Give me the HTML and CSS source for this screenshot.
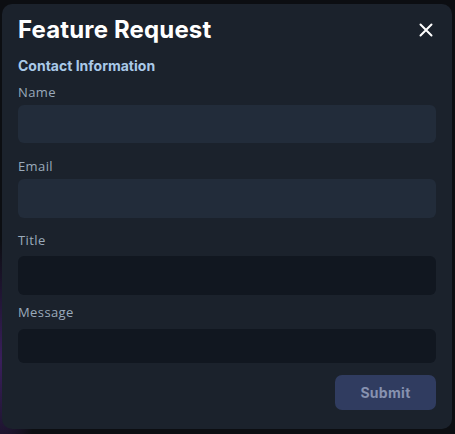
FILE: index.html
```html
<!DOCTYPE html>
<html>
<head>
<meta charset="utf-8">
<link rel="stylesheet" href="styles.css">
</head>
<body>
<div class="modal">
  <div class="header">
    <h1 class="title">Feature Request</h1>
    <button class="close" aria-label="Close">
      <svg width="14" height="14" viewBox="0 0 14 14"><path d="M1.5 1.5 L12.5 12.5 M12.5 1.5 L1.5 12.5" stroke="#ffffff" stroke-width="2" stroke-linecap="round"/></svg>
    </button>
  </div>
  <div class="section">Contact Information</div>
  <div class="field f-name">
    <label class="label">Name</label>
    <div class="input light"></div>
  </div>
  <div class="field f-email">
    <label class="label">Email</label>
    <div class="input light"></div>
  </div>
  <div class="field f-title">
    <label class="label">Title</label>
    <div class="input dark"></div>
  </div>
  <div class="field f-msg">
    <label class="label">Message</label>
    <div class="input dark short"></div>
  </div>
  <div class="actions">
    <button class="submit">Submit</button>
  </div>
</div>
</body>
</html>
```
FILE: styles.css
```css
html, body { margin: 0; padding: 0; }
body {
  width: 455px;
  height: 434px;
  background: radial-gradient(ellipse 40px 120px at 0px 360px, #3a1f5c 0%, rgba(40,20,70,0) 100%), #0c0e12;
  padding: 4px 3px 5px 2px;
  box-sizing: border-box;
  font-family: "Inter", "Liberation Sans", sans-serif;
}
.modal {
  width: 450px;
  height: 425px;
  background: #1b222c;
  border-radius: 10px;
  box-sizing: border-box;
  padding: 10px 16px 0 16px;
  display: flex;
  flex-direction: column;
}
.header {
  display: flex;
  justify-content: space-between;
  align-items: center;
  height: 32px;
}
.title {
  margin: 0;
  font-size: 24px;
  font-weight: 700;
  color: #ffffff;
  letter-spacing: 0.15px;
  line-height: 32px;
}
.close {
  background: none;
  border: 0;
  padding: 0;
  width: 14px;
  height: 14px;
  margin-right: 3px;
  display: flex;
}
.section {
  margin-top: 11px;
  font-size: 14px;
  font-weight: 700;
  color: #a9c9e8;
  line-height: 18px;
}
.field { display: flex; flex-direction: column; }
.label {
  font-family: "Open Sans", "Liberation Sans", sans-serif;
  font-size: 13px;
  color: #9aaabb;
  letter-spacing: 0.4px;
  line-height: 16px;
}
.input {
  border-radius: 6px;
  height: 38px;
}
.input.light { background: #222c3a; }
.input.dark { background: #111720; height: 39px; }
.input.short { height: 34px; }
.f-name { margin-top: 9px; }
.f-name .label { margin-bottom: 5px; }
.f-email { margin-top: 15px; }
.f-email .label { margin-bottom: 5px; }
.f-email .input { height: 39px; }
.f-title { margin-top: 14px; }
.f-title .label { margin-bottom: 8px; }
.f-msg { margin-top: 9px; }
.f-msg .label { margin-bottom: 9px; }
.actions {
  display: flex;
  justify-content: flex-end;
  margin-top: 12px;
}
.submit {
  width: 101px;
  height: 35px;
  border: 0;
  border-radius: 7px;
  background: #303c60;
  color: #8792b0;
  font-family: "Inter", "Liberation Sans", sans-serif;
  font-size: 14px;
  font-weight: 700;
  letter-spacing: 0.3px;
}
```
